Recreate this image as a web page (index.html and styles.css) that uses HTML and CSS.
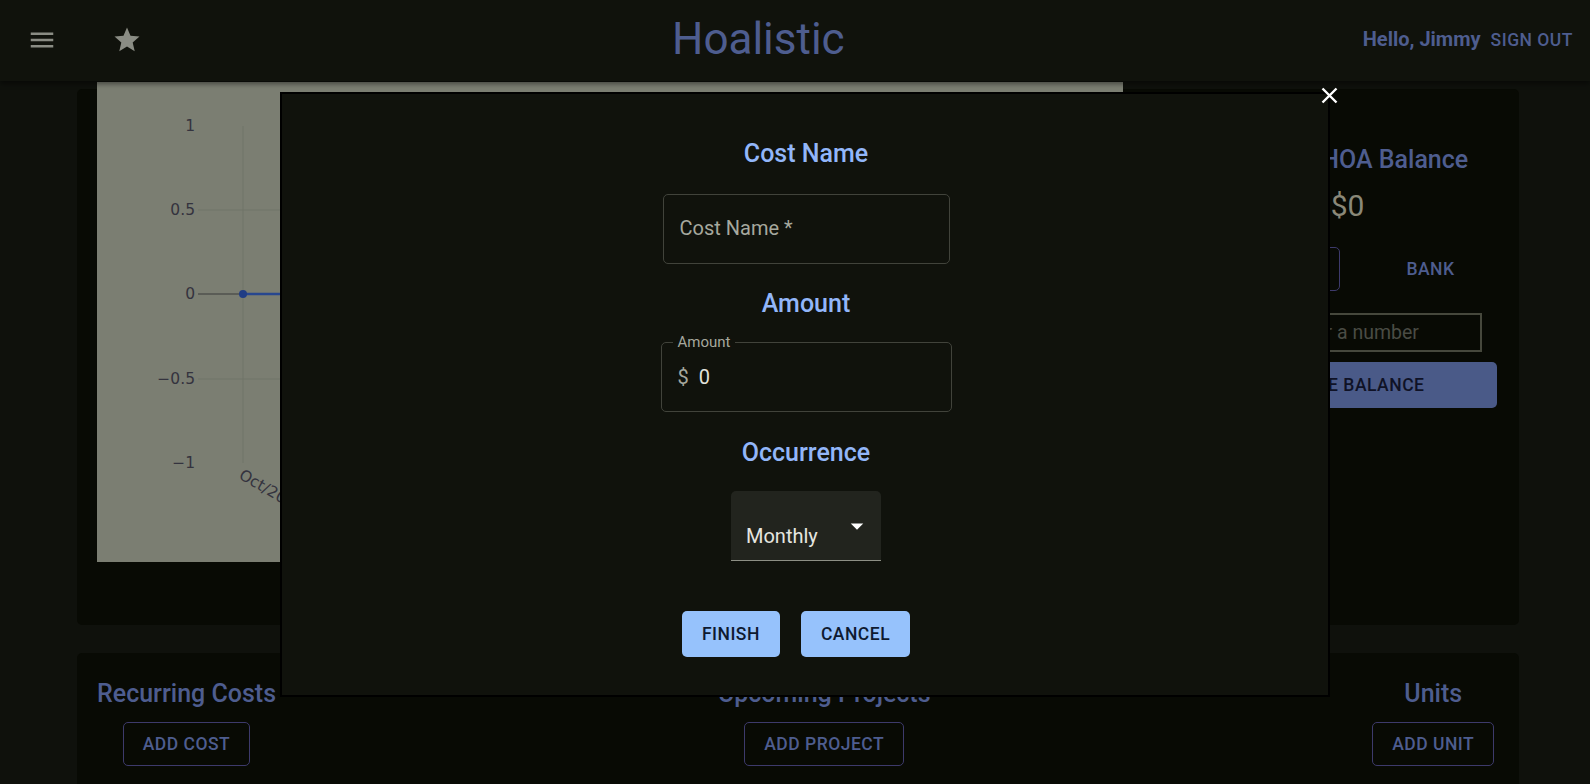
FILE: index.html
```html
<!DOCTYPE html>
<html lang="en">
<head>
<meta charset="utf-8">
<title>Hoalistic</title>
<link rel="stylesheet" href="styles.css">
</head>
<body>
<header class="appbar">
  <button class="icon-btn" aria-label="menu"><svg viewBox="0 0 24 24"><path d="M3 18h18v-2H3v2zm0-5h18v-2H3v2zm0-7v2h18V6H3z"/></svg></button>
  <button class="icon-btn star-btn" aria-label="favorites"><svg viewBox="0 0 24 24"><path d="M12 17.27L18.18 21l-1.64-7.03L22 9.24l-7.19-.61L12 2 9.19 8.63 2 9.24l5.46 4.73L5.82 21z"/></svg></button>
  <h1 class="brand">Hoalistic</h1>
  <div class="user">
    <span class="hello">Hello, Jimmy</span>
    <button class="signout">SIGN OUT</button>
  </div>
</header>

<main class="page">
  <section class="card overview">
    <div class="chart">
      <svg width="1026" height="480" viewBox="0 0 1026 480">
        <rect width="1026" height="480" fill="#7b7e72"/>
        <g stroke="#717468" stroke-width="1">
          <line x1="146" y1="44" x2="146" y2="381"/>
          <line x1="101" y1="128" x2="1010" y2="128"/>
          <line x1="101" y1="297" x2="1010" y2="297"/>
        </g>
        <line x1="101" y1="212" x2="146" y2="212" stroke="#3a3a3a" stroke-width="1.2"/>
        <line x1="146" y1="212" x2="1010" y2="212" stroke="#28478f" stroke-width="2.5"/>
        <circle cx="146" cy="212" r="4" fill="#203d85"/>
        <g class="ticks" text-anchor="end">
          <text x="98" y="49">1</text>
          <text x="98" y="133">0.5</text>
          <text x="98" y="217">0</text>
          <text x="98" y="302">−0.5</text>
          <text x="98" y="386">−1</text>
        </g>
        <text class="ticks" transform="translate(141,396) rotate(30)">Oct/2023</text>
      </svg>
    </div>
    <div class="balance">
      <h2 class="sec-title bal-title">Current HOA Balance</h2>
      <div class="amount">$0</div>
      <div class="toggle">
        <button class="tog tog-on">HOA</button>
        <button class="tog">BANK</button>
      </div>
      <input class="num-input" type="text" placeholder="Please enter a number">
      <button class="update">UPDATE BALANCE</button>
    </div>
  </section>

  <section class="card lists">
    <div class="col">
      <h2 class="sec-title">Recurring Costs</h2>
      <button class="out-btn">ADD COST</button>
    </div>
    <div class="col">
      <h2 class="sec-title">Upcoming Projects</h2>
      <button class="out-btn">ADD PROJECT</button>
    </div>
    <div class="col">
      <h2 class="sec-title">Units</h2>
      <button class="out-btn">ADD UNIT</button>
    </div>
  </section>
</main>

<div class="modal">
  <svg class="close" viewBox="0 0 17 17"><path d="M1.5 1.5L15.5 15.5M15.5 1.5L1.5 15.5"/></svg>
  <h3 class="m-title">Cost Name</h3>
  <div class="field name-field"><span class="ph">Cost Name *</span></div>
  <h3 class="m-title gap">Amount</h3>
  <div class="field amount-field">
    <span class="legend">Amount</span>
    <span class="adorn">$</span><span class="val">0</span>
  </div>
  <h3 class="m-title gap occ">Occurrence</h3>
  <div class="select">
    <span>Monthly</span>
    <svg class="caret" viewBox="0 0 24 24"><path d="M7 10l5 5 5-5z"/></svg>
  </div>
  <div class="actions">
    <button class="primary">FINISH</button>
    <button class="primary">CANCEL</button>
  </div>
</div>
</body>
</html>
```
FILE: styles.css
```css
* { box-sizing: border-box; }

body {
  margin: 0;
  width: 1590px;
  height: 784px;
  overflow: hidden;
  position: relative;
  background: #0f110c;
  font-family: Roboto, "Noto Sans", sans-serif;
}

button { font-family: Roboto, "Noto Sans", sans-serif; cursor: pointer; }

/* ---------- app bar ---------- */
.appbar {
  position: relative;
  z-index: 1;
  display: flex;
  align-items: center;
  height: 81px;
  padding: 0 17px 2px 27px;
  background: #10120c;
  box-shadow: 0 3px 5px rgba(0, 0, 0, 0.45);
}

.icon-btn {
  display: flex;
  width: 30px;
  height: 30px;
  padding: 0;
  border: 0;
  background: none;
}
.icon-btn svg { width: 30px; height: 30px; fill: #8a8c84; }
.star-btn { margin-left: 55px; }

.brand {
  margin: 0 0 0 530px;
  font-size: 44px;
  font-weight: 400;
  line-height: 1.235;
  color: #4e5d8f;
}

.user {
  margin-left: auto;
  display: flex;
  align-items: baseline;
  gap: 10px;
  margin-bottom: 2px;
}
.hello { font-size: 20px; font-weight: 700; line-height: 1.6; color: #4e5d8f; }
.signout {
  padding: 0;
  border: 0;
  background: none;
  font-size: 17.5px;
  font-weight: 500;
  letter-spacing: 0.5px;
  color: #4e5d8f;
}

/* ---------- page ---------- */
.page { padding: 8px 71px 0 77px; }

.card { background: #080a04; border-radius: 5px; }

.overview {
  display: flex;
  align-items: flex-start;
  height: 536px;
}

.chart { flex: none; width: 1026px; height: 480px; margin: -7px 0 0 20px; }
.chart svg { display: block; }
.ticks { font-family: "DejaVu Sans", Verdana, sans-serif; font-size: 15.5px; fill: #34333e; }

.balance {
  flex: 1;
  min-width: 0;
  display: flex;
  flex-direction: column;
  align-items: center;
  padding: 51px 0 0 53px;
}

.sec-title {
  margin: 0;
  font-size: 25px;
  font-weight: 500;
  line-height: 40px;
  white-space: nowrap;
  color: #4e5d8f;
}
.bal-title { margin-left: 5px; }

.amount { margin-top: 6px; font-size: 30px; line-height: 40px; color: #8a8878; }

.toggle { display: flex; gap: 41px; margin: 21px 35px 0 0; }
.tog {
  height: 44px;
  width: 100px;
  border: 1px solid transparent;
  border-radius: 5px;
  background: none;
  font-size: 17.5px;
  font-weight: 500;
  letter-spacing: 0.5px;
  color: #4e5d8f;
}
.tog-on { width: 160px; border-color: #3d3a6b; }

.num-input {
  margin: 22px 0 0 6px;
  width: 262px;
  height: 39px;
  padding: 0 3px;
  border: 2px solid #46483c;
  background: transparent;
  font-family: Roboto, sans-serif;
  font-size: 19.5px;
  color: #8a8878;
}
.num-input::placeholder { color: #4a4c44; }

.update {
  margin-top: 10px;
  width: 299px;
  height: 46px;
  border: 0;
  border-radius: 5px;
  background: #4a5a88;
  font-size: 17.5px;
  font-weight: 500;
  letter-spacing: 0.5px;
  color: #0f1226;
}

.lists {
  margin-top: 28px;
  height: 160px;
  display: flex;
  justify-content: space-between;
  padding: 21px 25px 0 20px;
}
.col { display: flex; flex-direction: column; align-items: center; }
.out-btn {
  margin-top: 8px;
  height: 44px;
  padding: 0 18.75px;
  border: 1px solid #3d3a6b;
  border-radius: 5px;
  background: none;
  font-size: 17.5px;
  font-weight: 500;
  letter-spacing: 0.5px;
  color: #4e5d8f;
}

/* ---------- modal ---------- */
.modal {
  position: absolute;
  z-index: 5;
  left: 280px;
  top: 92px;
  width: 1050px;
  height: 605px;
  display: flex;
  flex-direction: column;
  align-items: center;
  padding: 40px 0 0 2px;
  border: 2px solid #000;
  background: #10120c;
}

.close {
  position: absolute;
  right: -9.5px;
  top: -7.5px;
  width: 17px;
  height: 17px;
  fill: none;
  stroke: #ffffff;
  stroke-width: 2.4;
}

.m-title {
  margin: 0;
  font-size: 25px;
  font-weight: 500;
  line-height: 40px;
  color: #92b6f9;
}
.m-title.gap { margin-top: 20px; }
.m-title.occ { margin-top: 21px; }

.field {
  position: relative;
  height: 70px;
  border: 1px solid #41433b;
  border-radius: 5px;
  font-size: 20px;
}
.name-field { width: 287px; margin-top: 20px; padding-left: 16px; line-height: 67px; color: #a6a89e; }

.amount-field {
  width: 291px;
  margin-top: 18px;
  padding-left: 16px;
  line-height: 68px;
  display: flex;
  align-items: baseline;
}
.legend {
  position: absolute;
  left: 11px;
  top: -10px;
  padding: 0 5px;
  background: #10120c;
  font-size: 15px;
  line-height: 18px;
  color: #a6a89e;
}
.adorn { color: #a6a89e; margin-right: 10px; }
.val { color: #e2e2dc; }

.select {
  position: relative;
  width: 150px;
  height: 70px;
  margin-top: 18px;
  padding: 31px 0 0 15px;
  border-radius: 5px 5px 0 0;
  border-bottom: 1px solid #8d8f85;
  background: #22241e;
  font-size: 20px;
  line-height: 28.75px;
  color: #e6e6e0;
}
.caret { position: absolute; right: 9px; top: 20px; width: 30px; height: 30px; fill: #ffffff; }

.actions { display: flex; gap: 21px; margin: 50px 20px 0 0; }
.primary {
  height: 46px;
  padding: 0 20px;
  border: 0;
  border-radius: 5px;
  background: #96c2fc;
  font-size: 17.5px;
  font-weight: 500;
  letter-spacing: 0.5px;
  color: #0e1a30;
}
```
